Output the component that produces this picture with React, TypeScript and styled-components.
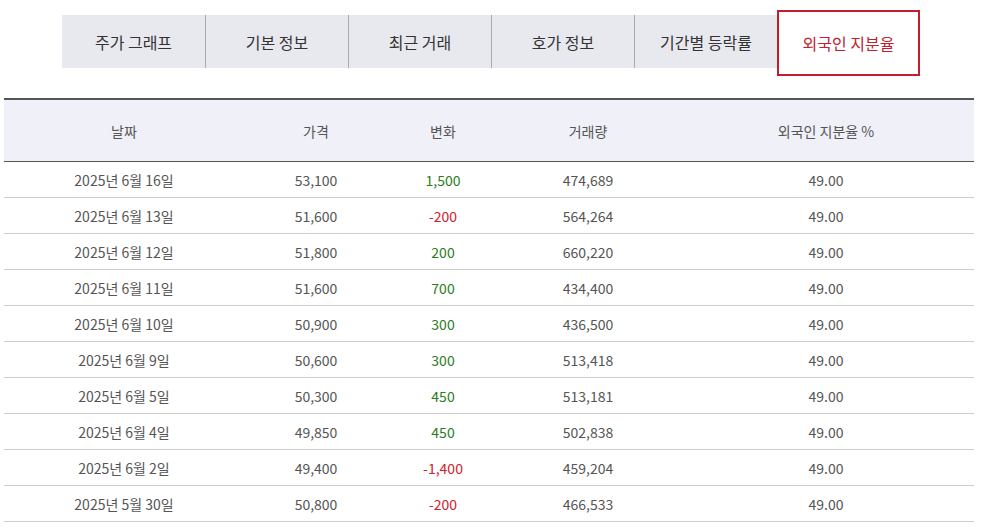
import * as React from 'react';
import styled, { createGlobalStyle } from 'styled-components';

const Global = createGlobalStyle`
	body {
		margin: 0;
		background: #fff;
		font-family: "Noto Sans CJK KR", "Noto Sans", sans-serif;
	}
`;

const Page = styled.div`
	width: 986px;
	padding-top: 10px;
`;

const Tabs = styled.div`
	display: flex;
	margin-left: 62px;
	height: 66px;
	align-items: flex-start;
`;

const Tab = styled.div<{ active?: boolean }>`
	width: 143px;
	box-sizing: border-box;
	display: flex;
	align-items: center;
	justify-content: center;
	font-size: 16px;
	${p => p.active ? `
		height: 66px;
		border: 2px solid #c0202e;
		color: #c0202e;
		background: #fff;
	` : `
		margin-top: 5px;
		height: 53px;
		background: #e8e8ef;
		color: #333;
		border-left: 1px solid #aaa;
		&:first-child { border-left: none; }
	`}
`;

const Table = styled.table`
	margin: 22px 0 0 4px;
	width: 970px;
	border-collapse: collapse;
	border-top: 2px solid #555;
	font-size: 14px;
	line-height: 18px;
	color: #555;
`;

const Th = styled.th`
	height: 61px;
	padding: 0;
	background: #f0f0f8;
	font-weight: normal;
	border-bottom: 1px solid #555;
	color: #555;
`;

const Td = styled.td<{ tone?: 'up' | 'down' }>`
	height: 35px;
	padding: 0;
	text-align: center;
	border-bottom: 1px solid #ccc;
	color: ${p => p.tone === 'up' ? '#2a7d1c' : p.tone === 'down' ? '#d0202e' : '#555'};
`;

const tabs = ['주가 그래프', '기본 정보', '최근 거래', '호가 정보', '기간별 등락률', '외국인 지분율'];

const rows = [
	['2025년 6월 16일', '53,100', '1,500', '474,689'],
	['2025년 6월 13일', '51,600', '-200', '564,264'],
	['2025년 6월 12일', '51,800', '200', '660,220'],
	['2025년 6월 11일', '51,600', '700', '434,400'],
	['2025년 6월 10일', '50,900', '300', '436,500'],
	['2025년 6월 9일', '50,600', '300', '513,418'],
	['2025년 6월 5일', '50,300', '450', '513,181'],
	['2025년 6월 4일', '49,850', '450', '502,838'],
	['2025년 6월 2일', '49,400', '-1,400', '459,204'],
	['2025년 5월 30일', '50,800', '-200', '466,533'],
];

export default function App() {
	return (
		<Page>
			<Global />
			<Tabs>
				{tabs.map((t, i) => <Tab key={t} active={i === 5}>{t}</Tab>)}
			</Tabs>
			<Table>
				<colgroup>
					<col style={{ width: 240 }} />
					<col style={{ width: 144 }} />
					<col style={{ width: 110 }} />
					<col style={{ width: 180 }} />
					<col />
				</colgroup>
				<thead>
					<tr>
						<Th>날짜</Th><Th>가격</Th><Th>변화</Th><Th>거래량</Th><Th>외국인 지분율 %</Th>
					</tr>
				</thead>
				<tbody>
					{rows.map(r => (
						<tr key={r[0]}>
							<Td>{r[0]}</Td>
							<Td>{r[1]}</Td>
							<Td tone={r[2].startsWith('-') ? 'down' : 'up'}>{r[2]}</Td>
							<Td>{r[3]}</Td>
							<Td>49.00</Td>
						</tr>
					))}
				</tbody>
			</Table>
		</Page>
	);
}
